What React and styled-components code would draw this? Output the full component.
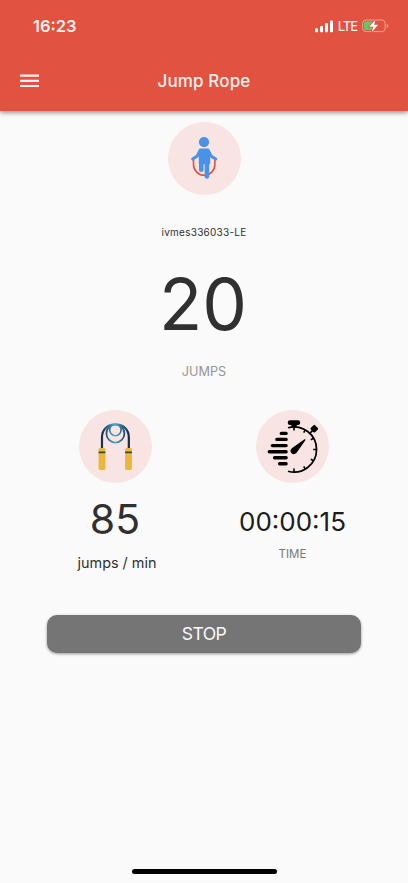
import React from 'react';
import styled, { createGlobalStyle } from 'styled-components';

const GlobalStyle = createGlobalStyle`
  * {
    box-sizing: border-box;
  }

  body {
    margin: 0;
    background: #fafafa;
    font-family: Inter, "Liberation Sans", sans-serif;
  }
`;

const Screen = styled.div`
  display: flex;
  flex-direction: column;
  height: 883px;
  background: #fafafa;
`;

const Header = styled.header`
  height: 111px;
  background: #e15241;
  color: #fdf1ee;
  box-shadow: 0 2px 4px rgba(0, 0, 0, .3), 0 1px 6px rgba(0, 0, 0, .14);
`;

const StatusBar = styled.div`
  display: flex;
  align-items: center;
  justify-content: space-between;
  height: 53px;
  padding: 0 19px 1px 33px;
`;

const Clock = styled.span`
  font-size: 16.5px;
  font-weight: 600;
  line-height: 20px;
`;

const Indicators = styled.div`
  display: flex;
  align-items: center;
`;

const Network = styled.span`
  margin: 0 5px 0 5px;
  font-size: 13px;
  font-weight: 500;
  line-height: 16px;
  letter-spacing: -1.1px;
`;

const Toolbar = styled.div`
  display: grid;
  grid-template-columns: 60px 1fr 60px;
  align-items: center;
  height: 56px;
`;

const MenuButton = styled.button`
  display: flex;
  padding: 0 0 0 20px;
  border: none;
  background: none;
  color: inherit;
`;

const Title = styled.h1`
  margin: 0;
  font-size: 17px;
  font-weight: 500;
  line-height: 20px;
  letter-spacing: .15px;
  text-align: center;
`;

const Main = styled.main`
  flex: 1;
  display: flex;
  flex-direction: column;
  align-items: center;
  padding-top: 11px;
`;

const Badge = styled.div`
  width: 73px;
  height: 73px;
  border-radius: 50%;
  background: #f8e5e3;

  svg {
    display: block;
  }
`;

const Text = styled.div`
  margin-top: ${props => props.$top}px;
  padding-left: ${props => props.$indent || 0}px;
  padding-right: ${props => props.$outdent || 0}px;
  font-size: ${props => props.$size}px;
  line-height: ${props => props.$line}px;
  letter-spacing: ${props => props.$spacing || 0}px;
  font-weight: ${props => props.$weight || 400};
  color: ${props => props.$color || '#303030'};
  white-space: nowrap;
`;

const Stats = styled.section`
  display: grid;
  grid-template-columns: 1fr 1fr;
  width: 354px;
  margin-top: 30px;
`;

const Stat = styled.div`
  display: flex;
  flex-direction: column;
  align-items: center;
`;

const StopButton = styled.button`
  width: 314px;
  height: 38px;
  margin-top: 43px;
  padding: 0;
  border: none;
  border-radius: 10px;
  background: #757575;
  box-shadow: 0 1px 3px rgba(0, 0, 0, .4);
  color: #fafafa;
  font-family: inherit;
  font-size: 17.6px;
  line-height: 38px;
  letter-spacing: -.6px;
`;

const HomeIndicator = styled.div`
  align-self: center;
  width: 145px;
  height: 5px;
  margin-bottom: 9px;
  border-radius: 3px;
  background: #000;
`;

function SignalIcon() {
  return (
    <svg width="18" height="13" viewBox="0 0 18 13" fill="#fff">
      <rect x="0" y="8.2" width="3" height="4" rx=".8" />
      <rect x="5" y="6" width="3" height="6.2" rx=".8" />
      <rect x="10" y="3.2" width="3" height="9" rx=".8" />
      <rect x="15" y=".4" width="3" height="11.8" rx=".8" />
    </svg>
  );
}

function BatteryIcon() {
  return (
    <svg width="27" height="14" viewBox="0 0 27 14">
      <rect x=".6" y="1" width="22.6" height="11.6" rx="3.4" fill="none" stroke="#f0a196" />
      <path d="M24.8 5v3.8q1.5-.6 1.5-1.9T24.8 5z" fill="#f0a196" />
      <path d="M4 2.5h6.500v8.600H4q-2 0-2-2V4.500q0-2 2-2z" fill="#69c664" />
      <path d="M13.5.8 7.300 7.800h3.900L9.800 13l6.400-7.200h-4z" fill="#fff" stroke="#e15241" strokeWidth="1.4" paintOrder="stroke" />
    </svg>
  );
}

function MenuIcon() {
  return (
    <svg width="19" height="14" viewBox="0 0 19 14" fill="currentColor">
      <path d="M0 .5h19v2.2H0zM0 5.700h19v2.200H0zM0 10.900h19v2.200H0z" />
    </svg>
  );
}

function JumperIcon() {
  return (
    <svg width="73" height="73" viewBox="0 0 73 73">
      <path d="M25.500 37.500V42.500a10.700 10.700 0 0 0 21.400 0v-5" fill="none" stroke="#e15241" strokeWidth="1.600" />
      <g fill="#4a92e6" stroke="#4a92e6" strokeLinejoin="round" strokeLinecap="round">
        <circle cx="36" cy="20.100" r="5.100" stroke="none" />
        <path d="M32 27.300h8.200l1.300 3v11.200H31.500V30.300z" strokeWidth="1.400" />
        <path d="M32.300 28.300 29.300 34 24.700 37M40 28.300 43 34 47.700 37" fill="none" strokeWidth="3.200" />
        <path d="M33.300 39v8.800" strokeWidth="4.600" />
        <path d="M38.900 39v15.500" strokeWidth="4.600" />
      </g>
    </svg>
  );
}

function RopeIcon() {
  return (
    <svg width="73" height="73" viewBox="0 0 73 73" fill="none">
      <defs>
        <linearGradient id="rope" x1="22" y1="0" x2="51" y2="0" gradientUnits="userSpaceOnUse">
          <stop offset="0" stopColor="#142743" />
          <stop offset=".22" stopColor="#256689" />
          <stop offset=".48" stopColor="#59a9cc" />
          <stop offset=".78" stopColor="#245978" />
          <stop offset="1" stopColor="#101e3e" />
        </linearGradient>
      </defs>
      <g stroke="url(#rope)">
        <path d="M23 39V27.500C23 19 29 14.300 36.400 14.300S49.800 19 49.800 27.500V39" strokeWidth="2.200" />
        <circle cx="36.400" cy="23.600" r="9" strokeWidth="1.800" />
        <circle cx="36.400" cy="20" r="5.700" strokeWidth="1.600" />
      </g>
      <g fill="#ecb53b">
        <rect x="19.600" y="38" width="6.800" height="22" rx="1.400" />
        <rect x="46.100" y="38" width="6.800" height="22" rx="1.400" />
      </g>
      <path d="M19.600 42.300h6.800M46.100 42.300h6.800" stroke="#28503f" strokeWidth="1.800" />
    </svg>
  );
}

function StopwatchIcon() {
  return (
    <svg width="73" height="73" viewBox="0 0 73 73" fill="none" stroke="#000">
      <path d="M32 17.700A22.600 22.600 0 1 1 32 61.300" strokeWidth="1.700" />
      <path
        d="M38 17v3.400M49.300 19.900l-1.600 2.800M57.600 28.200l-2.800 1.600M60.600 39.500h-3.400M57.600 50.800l-2.800-1.600M49.300 59.100l-1.600-2.800M38 62v-3.400M54.300 22.900l3-3"
        strokeWidth="1.600"
      />
      <path d="M34.100 12.700h7.800" strokeWidth="4.700" strokeLinecap="round" />
      <path d="M35 15h6l-1.200 2.500h-3.600z" fill="#000" stroke="none" />
      <rect x="55.800" y="16.200" width="5" height="5" rx=".5" transform="rotate(45 58.300 18.700)" fill="#000" />
      <path d="M48.900 29.800 36.500 38.500q-2.500 2-.7 4t4.300 0z" fill="#000" strokeWidth="1.200" strokeLinejoin="round" />
      <path
        d="M25.300 23.400h4.800M20.900 29.400h9.200M16.300 35.600h13.800M13.300 41.700h16.800M18.600 47.700h11.500M23.600 53.800h6.500"
        strokeWidth="3.400"
        strokeLinecap="round"
      />
    </svg>
  );
}

export default function App() {
  return (
    <>
      <GlobalStyle />
      <Screen>
        <Header>
          <StatusBar>
            <Clock>16:23</Clock>
            <Indicators>
              <SignalIcon />
              <Network>LTE</Network>
              <BatteryIcon />
            </Indicators>
          </StatusBar>
          <Toolbar>
            <MenuButton aria-label="Menu">
              <MenuIcon />
            </MenuButton>
            <Title>Jump Rope</Title>
          </Toolbar>
        </Header>
        <Main>
          <Badge><JumperIcon /></Badge>
          <Text $top={30} $size={10} $line={14} $spacing={.25}>ivmes336033-LE</Text>
          <Text $top={28} $size={71} $line={74} $outdent={2}>20</Text>
          <Text $top={23} $size={12.7} $line={16} $color="#959595">JUMPS</Text>
          <Stats>
            <Stat>
              <Badge><RopeIcon /></Badge>
              <Text $top={15} $size={41} $line={42} $outdent={1}>85</Text>
              <Text $top={14} $size={14.4} $line={18} $indent={3}>jumps / min</Text>
            </Stat>
            <Stat>
              <Badge><StopwatchIcon /></Badge>
              <Text $top={25} $size={26} $line={28} $color="#1c1c1c">00:00:15</Text>
              <Text $top={11} $size={11.5} $line={14} $color="#777">TIME</Text>
            </Stat>
          </Stats>
          <StopButton>STOP</StopButton>
        </Main>
        <HomeIndicator />
      </Screen>
    </>
  );
}
